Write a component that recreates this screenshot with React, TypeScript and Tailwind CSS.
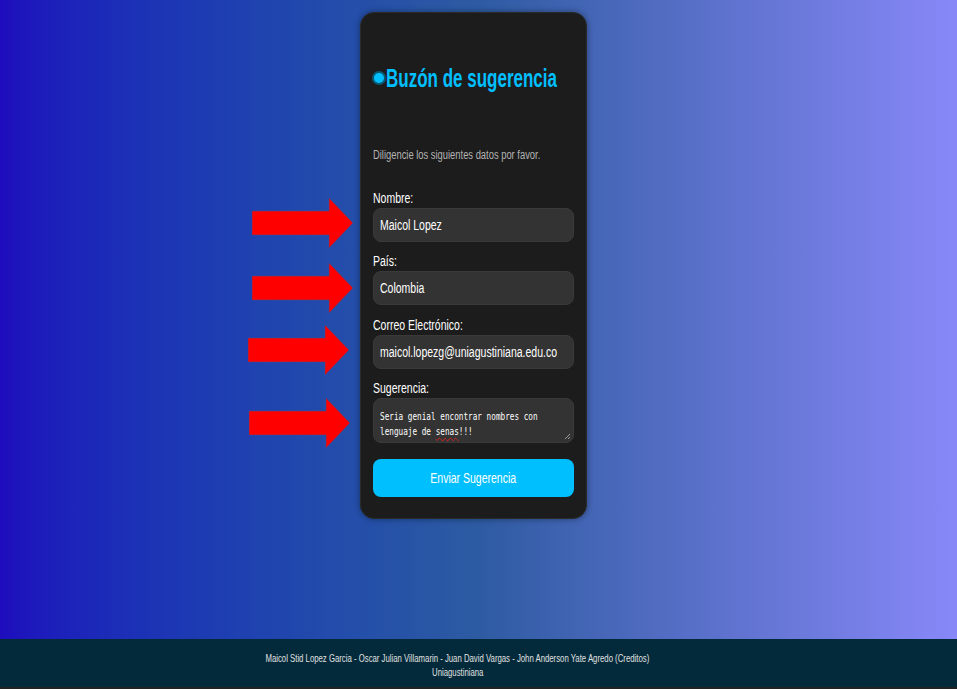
import React from "react";

// the reference text is visibly condensed, so Arial-width text gets squeezed horizontally
function Arrow({ className }: { className: string }) {
    return (
        <svg className={className} width="101" height="50" viewBox="0 0 101 50">
            <polygon points="0,13 77,13 77,0 101,25 77,50 77,37 0,37" fill="#ff0000" stroke="#4a4a8a" strokeWidth="0.6" />
        </svg>
    );
}

function Field({ label, value, top }: { label: string; value: string; top: string }) {
    return (
        <div className={top}>
            <label className="block text-[14px] leading-[17px] text-white">
                <span className="inline-block whitespace-nowrap origin-left scale-x-[0.75]">{label}</span>
            </label>
            <div className="mt-[1px] h-[34px] rounded-[8px] border border-[#3a3a3a] bg-[#333333] px-[6px] flex items-center text-[14px] text-white">
                <span className="inline-block whitespace-nowrap origin-left scale-x-[0.75]">{value}</span>
            </div>
        </div>
    );
}

export default function App() {
    return (
        <div
            className="w-[957px] h-[689px] flex flex-col overflow-hidden bg-gradient-to-r from-[#1e0cbd] via-[#2d5ba2] to-[#8888f8]"
            style={{ fontFamily: '"Liberation Sans", Arial, sans-serif' }}
        >
            <main className="relative flex-1 flex justify-center pt-[12px]">
                {/* Annotation arrows */}
                <Arrow className="absolute left-[252px] top-[198px]" />
                <Arrow className="absolute left-[252px] top-[263px]" />
                <Arrow className="absolute left-[248px] top-[325px]" />
                <Arrow className="absolute left-[249px] top-[398px]" />

                <div className="ml-[-10px] w-[227px] h-[507px] rounded-[14px] bg-[#1c1c1c] border border-[#2a2a2a] shadow-[0_0_6px_rgba(0,0,0,0.4)] px-[12px]">
                    <h1 className="mt-[51px] flex items-center text-[25px] leading-[28px] font-bold text-[#00bfff]">
                        <span className="ml-[1px] mr-[2px] inline-block shrink-0 w-[10px] h-[10px] rounded-full bg-[#00bfff] ring-[2px] ring-[#0a5a73]" />
                        <span className="inline-block whitespace-nowrap origin-left scale-x-[0.68]">Buzón de sugerencia</span>
                    </h1>
                    <p className="mt-[56px] text-[12.5px] leading-[14px] text-[#b4b4b4]">
                        <span className="inline-block whitespace-nowrap origin-left scale-x-[0.75]">Diligencie los siguientes datos por favor.</span>
                    </p>
                    <Field top="mt-[28px]" label="Nombre:" value="Maicol Lopez" />
                    <Field top="mt-[11px]" label="País:" value="Colombia" />
                    <Field top="mt-[12px]" label="Correo Electrónico:" value="maicol.lopezg@uniagustiniana.edu.co" />
                    <div className="mt-[11px]">
                        <label className="block text-[14px] leading-[17px] text-white">
                            <span className="inline-block whitespace-nowrap origin-left scale-x-[0.75]">Sugerencia:</span>
                        </label>
                        <div
                            className="relative mt-[1px] h-[45px] rounded-[8px] border border-[#3a3a3a] bg-[#333333] px-[6px] pt-[10px] text-[10px] leading-[15px] text-white"
                            style={{ fontFamily: '"DejaVu Sans Mono", "Liberation Mono", monospace' }}
                        >
                            <div className="whitespace-nowrap origin-left scale-x-[0.77]">Seria genial encontrar nombres con</div>
                            <div className="whitespace-nowrap origin-left scale-x-[0.77]">
                                lenguaje de <span className="underline decoration-wavy decoration-[#e02020] underline-offset-2">senas</span>!!!
                            </div>
                            <svg className="absolute right-[2px] bottom-[2px]" width="7" height="7" viewBox="0 0 7 7">
                                <path d="M6 1 L1 6 M6 4 L4 6" stroke="#9a9a9a" strokeWidth="1" />
                            </svg>
                        </div>
                    </div>
                    <button className="mt-[16px] w-full h-[38px] rounded-[8px] bg-[#00bfff] text-white text-[14px] flex items-center justify-center">
                        <span className="inline-block whitespace-nowrap scale-x-[0.75]">Enviar Sugerencia</span>
                    </button>
                </div>
            </main>
            <footer className="h-[50px] bg-[#022a3a] border-b-[2px] border-[#222] flex flex-col items-center justify-center pt-[3px] pr-[42px] text-[10.5px] leading-[14px] text-[#e0e0e0]">
                <span className="inline-block whitespace-nowrap scale-x-[0.74]">
                    Maicol Stid Lopez Garcia - Oscar Julian Villamarin - Juan David Vargas - John Anderson Yate Agredo (Creditos)
                </span>
                <span className="inline-block whitespace-nowrap scale-x-[0.74]">Uniagustiniana</span>
            </footer>
        </div>
    );
}
